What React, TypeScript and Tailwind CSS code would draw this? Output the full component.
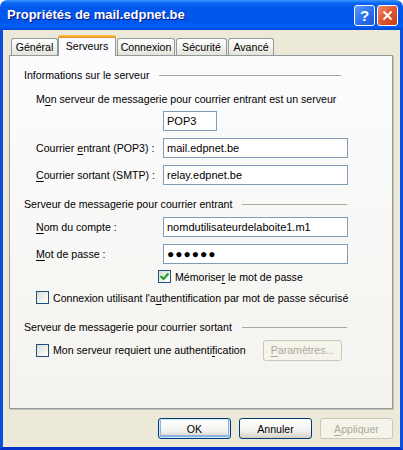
import React from "react";

const font = "font-['Liberation_Sans',Arial,sans-serif] text-[10.6px] leading-[14px] text-black";

// label text with one underlined mnemonic letter
function Mn({ before, key_, after }: { before?: string; key_: string; after?: string }) {
  return (
    <span className="whitespace-nowrap">
      {before}
      <span className="underline underline-offset-[2px]">{key_}</span>
      {after}
    </span>
  );
}

function TextBox({ value, width = "w-[185px]" }: { value: React.ReactNode; width?: string }) {
  return (
    <div className={`${width} h-[20px] border border-[#7F9DB9] bg-white pl-[3px] flex items-center shrink-0 text-[11px]`}>
      {value}
    </div>
  );
}

function CheckBox({ checked = false }: { checked?: boolean }) {
  return (
    <div className="w-[13px] h-[13px] border border-[#1C5180] bg-[linear-gradient(135deg,#DCDBD5_0%,#F2F2EE_60%,#FFFFFF_100%)] flex items-center justify-center shrink-0">
      {checked && (
        <svg width="9" height="9" viewBox="0 0 9 9">
          <path d="M0.5 4 L3.5 7 L8.5 1.5" stroke="#21A121" strokeWidth="2.2" fill="none" />
        </svg>
      )}
    </div>
  );
}

function GroupHeader({ label, width }: { label: string; width: string }) {
  return (
    <div className={`flex items-center h-[14px] ${width}`}>
      <span className="whitespace-nowrap">{label}</span>
      <div className="flex-1 ml-[10px] h-px bg-[#A7A6A0] mt-[1px]" />
    </div>
  );
}

function XPButton({
  children,
  disabled = false,
  isDefault = false,
  width = "w-[73px]",
}: {
  children: React.ReactNode;
  disabled?: boolean;
  isDefault?: boolean;
  width?: string;
}) {
  if (disabled) {
    return (
      <div className={`${width} h-[21px] rounded-[3px] border border-[#C9C7BA] bg-[#F5F4EA] text-[#ACA899] flex items-center justify-center`}>
        {children}
      </div>
    );
  }
  return (
    <div className={`${width} h-[21px] rounded-[3px] border border-[#003C74] bg-[linear-gradient(180deg,#FFFFFF_0%,#F3F3EF_60%,#D6D0C5_100%)] flex items-center justify-center ${isDefault ? "shadow-[inset_0_0_0_1px_#CEE7FF,inset_0_-1px_0_2px_#8DB2E3]" : ""}`}>
      {children}
    </div>
  );
}

function Tab({ label, width, selected = false, ml = "" }: { label: string; width: string; selected?: boolean; ml?: string }) {
  if (selected) {
    return (
      <div className={`${width} ${ml} h-[21px] -mb-px relative z-10 flex flex-col`}>
        <div className="h-[3px] rounded-t-[3px] bg-[linear-gradient(180deg,#FFC83C_0%,#E68B2C_100%)]" />
        <div className="flex-1 bg-[#FCFCFE] border-x border-[#919B9C] flex items-start justify-center pt-[1px]">
          {label}
        </div>
      </div>
    );
  }
  return (
    <div className={`${width} ${ml} h-[17px] rounded-t-[3px] border border-b-0 border-[#919B9C] bg-[linear-gradient(180deg,#FFFFFF_0%,#F3F3EF_50%,#E4E3DA_100%)] flex items-start justify-center pt-[1px]`}>
      {label}
    </div>
  );
}

export default function App() {
  return (
    <div className={`w-[403px] h-[450px] flex flex-col ${font}`}>
      {/* Title bar */}
      <div className="h-[30px] shrink-0 rounded-t-[7px] bg-[linear-gradient(180deg,#3D95FF_0%,#0A68F0_10%,#0058EE_25%,#0054E8_70%,#0060F8_88%,#0046D5_100%)] flex items-center pl-[7px] pr-[5px]">
        <span className="font-['Liberation_Sans',Arial,sans-serif] font-bold text-[13px] text-white [text-shadow:1px_1px_0_#0A1883] flex-1">
          Propriétés de mail.edpnet.be
        </span>
        <div className="flex gap-[2px] items-center">
          <div className="w-[21px] h-[21px] rounded-[3px] border border-white bg-[linear-gradient(135deg,#5A9BFF_0%,#2F74F0_50%,#1A55D8_100%)] flex items-center justify-center">
            <span className="font-['Liberation_Sans',Arial,sans-serif] font-bold text-[15px] text-white leading-none">?</span>
          </div>
          <div className="w-[21px] h-[21px] rounded-[3px] border border-white bg-[linear-gradient(135deg,#F08A64_0%,#E0562E_50%,#C63E12_100%)] flex items-center justify-center">
            <svg width="11" height="11" viewBox="0 0 11 11">
              <path d="M1.5 1.5 L9.5 9.5 M9.5 1.5 L1.5 9.5" stroke="white" strokeWidth="2" />
            </svg>
          </div>
        </div>
      </div>

      {/* Body */}
      <div className="flex-1 flex flex-col bg-[#ECE9D8] border-x-[3px] border-b-[3px] border-x-[#0B4FDF] border-b-[#0531C9] pt-[5px] pl-[6px]">
        {/* Tabs */}
        <div className="flex items-end ml-[2px] h-[20px]">
          <Tab label="Général" width="w-[47px]" />
          <Tab label="Serveurs" width="w-[58px]" selected />
          <Tab label="Connexion" width="w-[58px]" ml="ml-px" />
          <Tab label="Sécurité" width="w-[51px]" ml="ml-px" />
          <Tab label="Avancé" width="w-[46px]" ml="ml-px" />
        </div>

        {/* Panel */}
        <div className="w-[384px] h-[354px] border border-[#919B9C] bg-[linear-gradient(180deg,#FCFCFE_0%,#F4F3EE_100%)] shadow-[1px_1px_0_#C5C2B2] flex flex-col pl-[14px]">
          <div className="mt-[12px]">
            <GroupHeader label="Informations sur le serveur" width="w-[317px]" />
          </div>
          <div className="pl-[12px] flex flex-col">
            <div className="mt-[10px] h-[14px]">
              <Mn before="M" key_="o" after="n serveur de messagerie pour courrier entrant est un serveur" />
            </div>
            <div className="mt-[5px] pl-[127px]">
              <TextBox value="POP3" width="w-[54px]" />
            </div>
            <div className="mt-[7px] flex items-center">
              <div className="w-[127px]">
                <Mn before="Courrier " key_="e" after="ntrant (POP3) :" />
              </div>
              <TextBox value="mail.edpnet.be" />
            </div>
            <div className="mt-[7px] flex items-center">
              <div className="w-[127px]">
                <Mn key_="C" after="ourrier sortant (SMTP) :" />
              </div>
              <TextBox value="relay.edpnet.be" />
            </div>
          </div>

          <div className="mt-[12px]">
            <GroupHeader label="Serveur de messagerie pour courrier entrant" width="w-[323px]" />
          </div>
          <div className="pl-[12px] flex flex-col">
            <div className="mt-[6px] flex items-center">
              <div className="w-[127px]">
                <Mn key_="N" after="om du compte :" />
              </div>
              <TextBox value="nomdutilisateurdelaboite1.m1" />
            </div>
            <div className="mt-[7px] flex items-center">
              <div className="w-[127px]">
                <Mn key_="M" after="ot de passe :" />
              </div>
              <TextBox
                value={<span className="text-[12px] tracking-[1px] leading-none">●●●●●●</span>}
              />
            </div>
            <div className="mt-[6px] h-[13px] flex items-center pl-[122px] gap-[4px]">
              <CheckBox checked />
              <Mn before="Mémorise" key_="r" after=" le mot de passe" />
            </div>
            <div className="mt-[8px] h-[13px] flex items-center gap-[4px]">
              <CheckBox />
              <Mn before="Connexion utilisant l'a" key_="u" after="thentification par mot de passe sécurisé" />
            </div>
          </div>

          <div className="mt-[16px]">
            <GroupHeader label="Serveur de messagerie pour courrier sortant" width="w-[323px]" />
          </div>
          <div className="pl-[12px] mt-[6px] h-[20px] flex items-center">
            <div className="w-[227px] flex items-center gap-[4px]">
              <CheckBox />
              <Mn before="Mon serveur requiert une authenti" key_="f" after="ication" />
            </div>
            <XPButton disabled width="w-[79px]">
              <Mn key_="P" after="aramètres..." />
            </XPButton>
          </div>
        </div>

        {/* Dialog buttons */}
        <div className="mt-[9px] flex justify-end gap-[8px] pr-[7px]">
          <XPButton isDefault>OK</XPButton>
          <XPButton>Annuler</XPButton>
          <XPButton disabled>
            <Mn key_="A" after="ppliquer" />
          </XPButton>
        </div>
      </div>
    </div>
  );
}
